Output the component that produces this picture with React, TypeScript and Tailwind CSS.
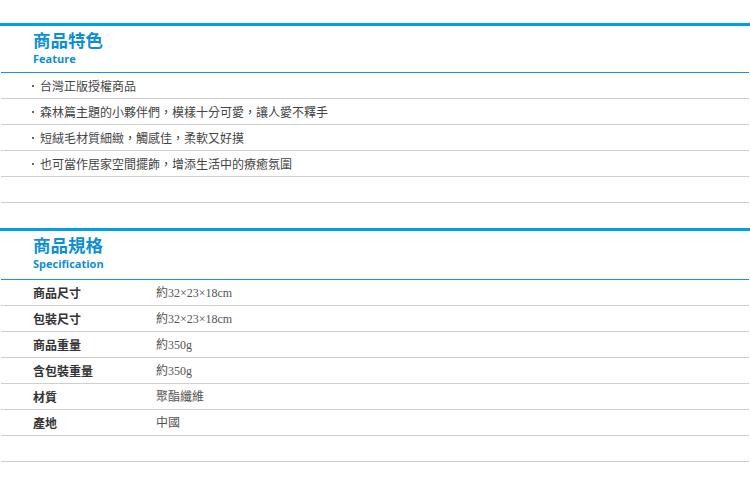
import React from "react";

const features = [
  "台灣正版授權商品",
  "森林篇主題的小夥伴們，模樣十分可愛，讓人愛不釋手",
  "短絨毛材質細緻，觸感佳，柔軟又好摸",
  "也可當作居家空間擺飾，增添生活中的療癒氛圍",
  "",
];

const specs: [string, string][] = [
  ["商品尺寸", "約32×23×18cm"],
  ["包裝尺寸", "約32×23×18cm"],
  ["商品重量", "約350g"],
  ["含包裝重量", "約350g"],
  ["材質", "聚酯纖維"],
  ["產地", "中國"],
  ["", ""],
];

const cjk = "font-['Noto_Sans_CJK_TC','Noto_Sans',sans-serif]";

// 區塊標題：粗藍條 + 中英標題 + 細藍線
const SectionHead = ({ zh, en, h }: { zh: string; en: string; h: string }) => (
  <div>
    <div className="h-[3px] bg-[#00a0e9]" />
    <div className={`${h} pl-[33px] pt-[4px] flex flex-col`}>
      <div className={`${cjk} text-[17.5px] leading-[20px] font-bold text-[#0b8fd9]`}>{zh}</div>
      <div className="font-['Open_Sans',sans-serif] text-[11px] leading-[13px] font-bold text-[#0b8fd9] mt-[2px]">
        {en}
      </div>
    </div>
    <div className="h-px mx-[1px] bg-[#1b95d9]" />
  </div>
);

export default function App() {
  return (
    <div className={`w-[750px] h-[480px] bg-white ${cjk}`}>
      <div className="pt-[23px]">
        <SectionHead zh="商品特色" en="Feature" h="h-[46px]" />
        <ul>
          {features.map((f, i) => (
            <li
              key={i}
              className="h-[26px] mx-[1px] border-b border-[#cfcfcf] flex items-center pl-[31px] text-[12px] text-[#444]"
            >
              {f && (
                <>
                  <span className="w-[2px] h-[2px] bg-[#666] mr-[6px] mt-[1px]" />
                  <span>{f}</span>
                </>
              )}
            </li>
          ))}
        </ul>
      </div>

      <div className="pt-[25px]">
        <SectionHead zh="商品規格" en="Specification" h="h-[48px]" />
        <div>
          {specs.map(([k, v], i) => (
            <div
              key={i}
              className="h-[26px] mx-[1px] border-b border-[#cfcfcf] flex items-center text-[12px]"
            >
              <div className="w-[155px] pl-[32px] font-bold text-[#333]">{k}</div>
              <div className="font-['Liberation_Serif','Noto_Sans_CJK_TC',serif] text-[#555]">{v}</div>
            </div>
          ))}
        </div>
      </div>
    </div>
  );
}
